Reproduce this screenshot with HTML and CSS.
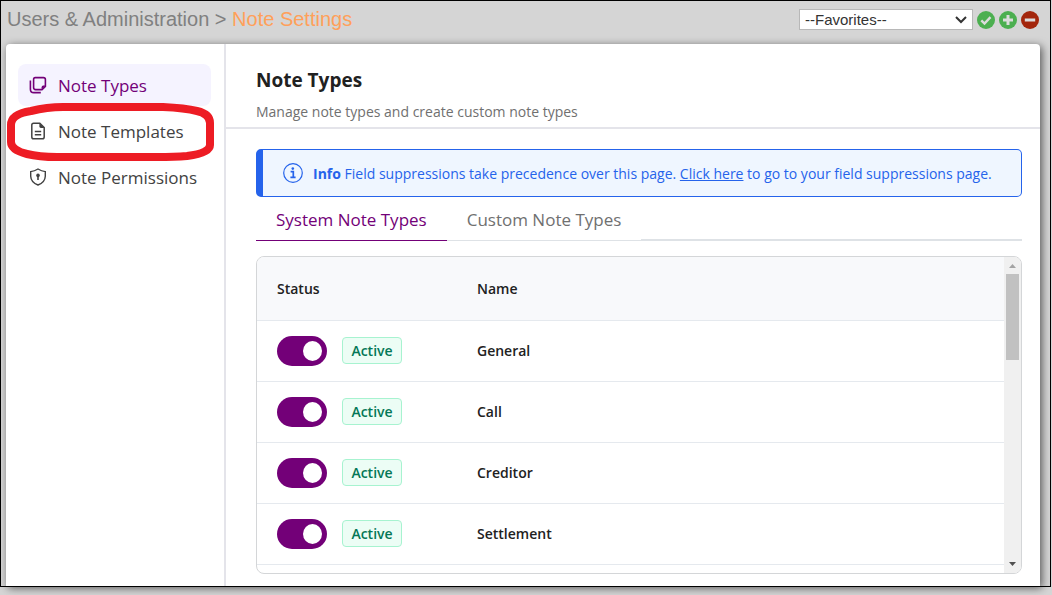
FILE: index.html
```html
<!DOCTYPE html>
<html lang="en">
<head>
    <meta charset="UTF-8">
    <meta name="viewport" content="width=device-width, initial-scale=1.0">
    <title>Note Settings</title>
    <link rel="stylesheet" href="styles.css">
</head>
<body>
    <div class="frame">
        <header class="topbar">
            <div class="breadcrumb">Users &amp; Administration &gt; <span class="current">Note Settings</span></div>
            <div class="favorites">
                <div class="select-wrap">
                    <select class="favorites-select" aria-label="Favorites">
                        <option>--Favorites--</option>
                    </select>
                    <svg class="chevron" viewBox="0 0 12 8" aria-hidden="true"><path d="M1 1l5 5 5-5" fill="none" stroke="#333" stroke-width="2"/></svg>
                </div>
                <button class="round-btn" type="button" aria-label="Go">
                    <svg viewBox="0 0 18 18"><circle cx="9" cy="9" r="9" fill="#4caf50"/><path d="M4.3 9.3l3.2 3.2 6-6.4" fill="none" stroke="#dcdcdc" stroke-width="2.4"/></svg>
                </button>
                <button class="round-btn" type="button" aria-label="Add">
                    <svg viewBox="0 0 18 18"><circle cx="9" cy="9" r="9" fill="#4caf50"/><path d="M9 4v10M4 9h10" stroke="#dcdcdc" stroke-width="3"/></svg>
                </button>
                <button class="round-btn" type="button" aria-label="Remove">
                    <svg viewBox="0 0 18 18"><circle cx="9" cy="9" r="9" fill="#a3260c"/><path d="M3.8 9h10.4" stroke="#dcdcdc" stroke-width="3"/></svg>
                </button>
            </div>
        </header>

        <div class="panel">
            <nav class="sidebar">
                <a class="nav-item active" href="#types">
                    <svg class="nav-icon" viewBox="0 0 18 18" fill="none" stroke="currentColor" stroke-width="1.6">
                        <path d="M6.2 1.6h8.2q2 0 2 2v6.8l-3.4 3.2H6.6q-2-.2-2-2.2V3.4q0-1.8 1.6-1.8z"/>
                        <path d="M16.6 9.6l-4 4v-2.4q0-1.6 1.6-1.6z" fill="currentColor" stroke="none"/>
                        <path d="M1.4 4.6v8.6q0 3.4 3.4 3.4h7"/>
                    </svg>
                    Note Types
                </a>
                <a class="nav-item" href="#templates">
                    <svg class="nav-icon" viewBox="0 0 18 18" fill="none" stroke="currentColor" stroke-width="1.5">
                        <path d="M4.6 1.2h6.2l4.4 4.4v9.4q0 1.8-1.8 1.8H4.6q-1.8 0-1.8-1.8V3q0-1.8 1.8-1.8z"/>
                        <path d="M10.4 1l5 5h-3.6q-1.4 0-1.4-1.4z" fill="currentColor" stroke="none"/>
                        <path d="M5.8 9.6h6.4M5.8 12.7h6.4"/>
                    </svg>
                    Note Templates
                    <svg class="marker" viewBox="0 0 208 60" preserveAspectRatio="none" aria-hidden="true">
                        <path d="M4 22Q4 11 24 8Q40 4 56 4H156Q178 5 190 8Q203 11 203 20V42Q203 50 180 53Q168 54 150 54H50Q32 54 20 51Q4 47 4 39z"/>
                    </svg>
                </a>
                <a class="nav-item" href="#permissions">
                    <svg class="nav-icon" viewBox="0 0 18 18" fill="none" stroke="currentColor" stroke-width="1.4">
                        <path d="M9 1Q5.400 3.200 1.700 3.600V8.200Q1.900 14.200 9 17Q16.100 14.200 16.300 8.200V3.600Q12.600 3.200 9 1z"/>
                        <circle cx="9" cy="7.400" r="1.800" fill="currentColor" stroke="none"/>
                        <path d="M9 7.500v4.600" stroke-width="1.600"/>
                    </svg>
                    Note Permissions
                </a>
            </nav>

            <main class="content">
                <div class="page-head">
                    <h1>Note Types</h1>
                    <p>Manage note types and create custom note types</p>
                </div>

                <div class="page-body">
                    <div class="info-box">
                        <svg class="info-icon" viewBox="0 0 20 20" fill="none" stroke="currentColor">
                            <circle cx="10" cy="10" r="9.300" stroke-width="1.200"/>
                            <circle cx="9.800" cy="5.600" r="1.300" fill="currentColor" stroke="none"/>
                            <path d="M7.600 8.600h2.700v5.600M7.400 14.300h5.200" stroke-width="1.700"/>
                        </svg>
                        <p><strong>Info</strong> Field suppressions take precedence over this page. <a href="#suppressions">Click here</a> to go to your field suppressions page.</p>
                    </div>

                    <div class="tabs" role="tablist">
                        <button class="tab selected" type="button" role="tab" aria-selected="true">System Note Types</button>
                        <button class="tab" type="button" role="tab" aria-selected="false">Custom Note Types</button>
                        <div class="tabs-rest"></div>
                    </div>

                    <div class="table-box">
                        <table class="types-table">
                            <thead>
                                <tr><th class="status-col">Status</th><th>Name</th></tr>
                            </thead>
                            <tbody>
                                <tr>
                                    <td><div class="status"><input class="switch" id="general" type="checkbox" checked><label class="badge" for="general">Active</label></div></td>
                                    <td>General</td>
                                </tr>
                                <tr>
                                    <td><div class="status"><input class="switch" id="call" type="checkbox" checked><label class="badge" for="call">Active</label></div></td>
                                    <td>Call</td>
                                </tr>
                                <tr>
                                    <td><div class="status"><input class="switch" id="creditor" type="checkbox" checked><label class="badge" for="creditor">Active</label></div></td>
                                    <td>Creditor</td>
                                </tr>
                                <tr>
                                    <td><div class="status"><input class="switch" id="settlement" type="checkbox" checked><label class="badge" for="settlement">Active</label></div></td>
                                    <td>Settlement</td>
                                </tr>
                            </tbody>
                        </table>
                        <div class="scrollbar" aria-hidden="true">
                            <svg class="arrow" viewBox="0 0 17 17"><path d="M5 11h7L8.500 7z" fill="#a3a3a3"/></svg>
                            <div class="track"><div class="thumb"></div></div>
                            <svg class="arrow" viewBox="0 0 17 17"><path d="M5 6h7L8.500 10z" fill="#505050"/></svg>
                        </div>
                    </div>
                </div>
            </main>
        </div>
    </div>
</body>
</html>
```

FILE: styles.css
```css
* {
    box-sizing: border-box;
}

body {
    margin: 0;
    padding: 0 1px 8px 0;
    min-height: 100vh;
    display: flex;
    flex-direction: column;
    background-color: #d5d5d5;
    color: #212121;
    font-family: 'Open Sans', 'Noto Sans', sans-serif;
    font-size: 14px;
}

h1, p {
    margin: 0;
}

.frame {
    flex: 1;
    display: flex;
    flex-direction: column;
    border: 1px solid #000;
}

/* top bar */
.topbar {
    height: 43px;
    padding: 0 11px 6px 6px;
    display: flex;
    align-items: center;
    justify-content: space-between;
}

.breadcrumb {
    font-family: 'Liberation Sans', Arial, sans-serif;
    font-size: 20px;
    color: #808080;
}

.breadcrumb .current {
    color: #ffa05a;
}

.favorites {
    display: flex;
    align-items: center;
    gap: 4px;
}

.select-wrap {
    position: relative;
    display: flex;
}

.favorites-select {
    appearance: none;
    width: 174px;
    height: 21px;
    font-family: 'Liberation Sans', Arial, sans-serif;
    font-size: 15px;
    padding: 0 20px 0 5px;
    color: #333;
    background-color: #fff;
    border: 1px solid #b8b8b8;
    border-radius: 0;
}

.chevron {
    position: absolute;
    top: 7px;
    right: 6px;
    width: 12px;
    height: 8px;
    pointer-events: none;
}

.round-btn {
    width: 18px;
    height: 18px;
    padding: 0;
    border: 0;
    background: none;
}

.round-btn svg {
    display: block;
}

/* main panel */
.panel {
    flex: 1;
    display: flex;
    margin: 0 10px 0 5px;
    background-color: #fff;
    border-radius: 4px 4px 0 0;
    box-shadow: 2px 2px 8px rgba(0, 0, 0, 0.6);
}

.sidebar {
    flex: 0 0 220px;
    padding: 20px 13px 0 12px;
    border-right: 2px solid #e4e4ea;
    display: flex;
    flex-direction: column;
    gap: 4px;
}

.nav-item {
    position: relative;
    height: 42px;
    padding-left: 11px;
    display: flex;
    align-items: center;
    gap: 11px;
    border-radius: 8px;
    color: #424242;
    font-size: 17px;
    font-weight: 500;
    text-decoration: none;
}

.nav-item.active {
    background-color: #f5f3ff;
    color: #730078;
}

.nav-icon {
    width: 18px;
    height: 18px;
}

/* red ring drawn over the templates link */
.marker {
    position: absolute;
    top: -7px;
    left: -11px;
    width: 208px;
    height: 60px;
    z-index: 1;
    fill: none;
    stroke: #ed1c24;
    stroke-width: 8px;
}

.content {
    flex: 1;
    min-width: 0;
    display: flex;
    flex-direction: column;
}

.page-head {
    height: 85px;
    padding: 22px 30px 0;
    border-bottom: 2px solid #e4e4ea;
}

.page-head h1 {
    font-size: 19px;
    line-height: 28px;
    font-weight: 700;
}

.page-head p {
    margin-top: 8px;
    line-height: 20px;
    color: #707070;
}

.page-body {
    flex: 1;
    padding: 20px 18px 12px 30px;
    display: flex;
    flex-direction: column;
}

.info-box {
    min-height: 48px;
    padding-left: 20px;
    display: flex;
    align-items: center;
    gap: 10px;
    background-color: #eff6ff;
    color: #2563eb;
    border: 1px solid #2563eb;
    border-left-width: 7px;
    border-radius: 5px;
}

.info-icon {
    flex: none;
    width: 20px;
    height: 20px;
}

.info-box a {
    color: inherit;
}

/* tabs */
.tabs {
    height: 44px;
    display: flex;
}

.tab {
    padding: 2px 20px 0;
    border: 0;
    border-bottom: 1px solid #dee2e6;
    background: none;
    color: #707070;
    font-family: inherit;
    font-size: 17px;
    font-weight: 500;
}

.tab.selected {
    color: #730078;
    border-bottom-color: #730078;
}

.tabs-rest {
    flex: 1;
    border-bottom: 2px solid #dee2e6;
}

/* table */
.table-box {
    flex: 1;
    margin-top: 15px;
    display: flex;
    align-items: stretch;
    border: 1px solid #d4d6d8;
    border-radius: 8px;
    overflow: hidden;
}

.types-table {
    flex: 1;
    align-self: flex-start;
    border-collapse: collapse;
    font-weight: 600;
}

.types-table th,
.types-table td {
    height: 61px;
    padding: 0 0 0 20px;
    text-align: left;
    border-bottom: 1px solid #e5e9ee;
}

.types-table th {
    height: 63px;
    font-weight: 600;
    background-color: #f8f9fb;
}

.types-table .status-col {
    width: 200px;
}

.status {
    display: flex;
    align-items: center;
    gap: 15px;
}

.switch {
    appearance: none;
    width: 50px;
    height: 30px;
    margin: 0;
    padding: 5px;
    display: flex;
    border-radius: 15px;
    background-color: #bdbdbd;
}

.switch::before {
    content: "";
    width: 20px;
    height: 20px;
    border-radius: 50%;
    background-color: #fff;
}

.switch:checked {
    padding-left: 26px;
    background-color: #730078;
}

.badge {
    width: 60px;
    height: 27px;
    line-height: 25px;
    text-align: center;
    color: #047857;
    background-color: #ecfdf5;
    border: 1px solid #a7f3d0;
    border-radius: 4px;
}

.scrollbar {
    width: 17px;
    display: flex;
    flex-direction: column;
    background-color: #f0f0f0;
}

.arrow {
    width: 17px;
    height: 17px;
}

.track {
    flex: 1;
    padding: 0 2px;
}

.thumb {
    height: 86px;
    background-color: #c1c1c1;
}
```
